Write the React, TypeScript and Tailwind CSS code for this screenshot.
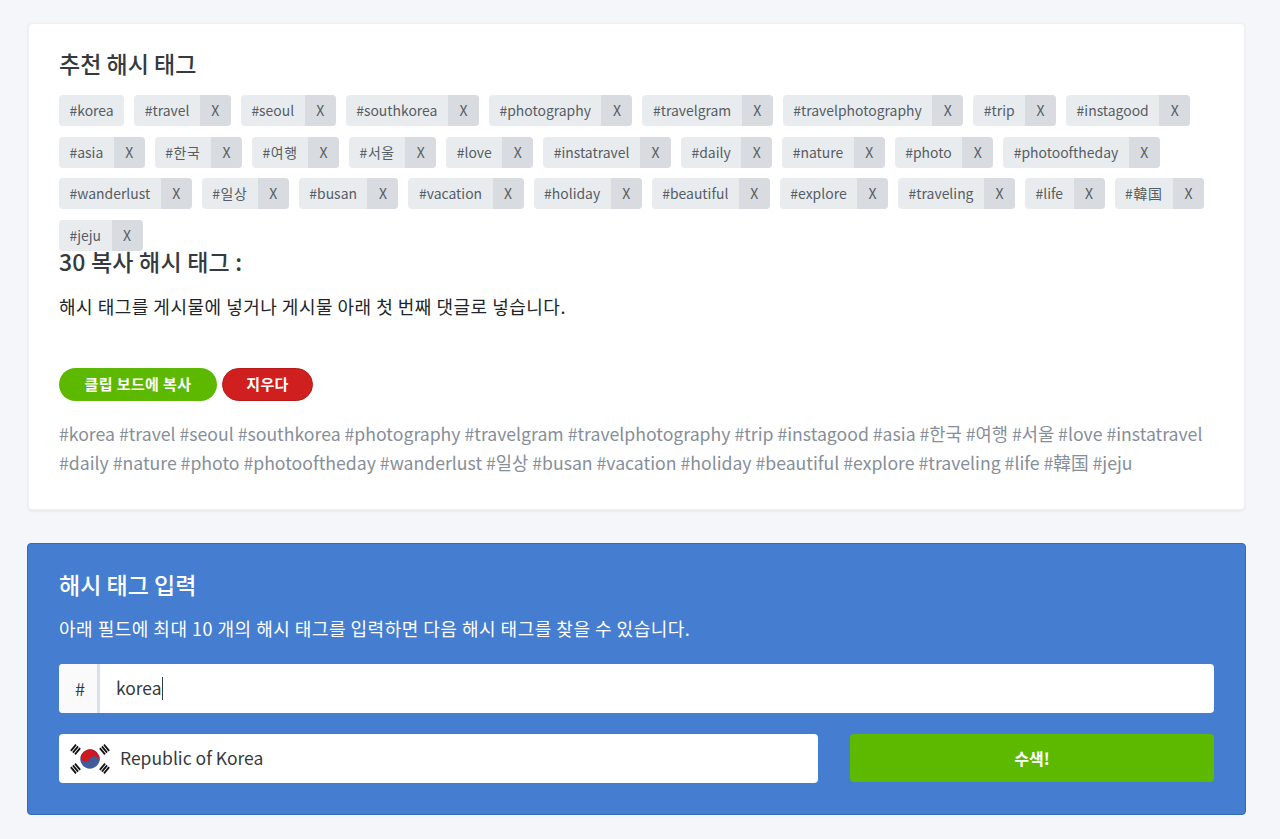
import React from "react";

const font = { fontFamily: '"Noto Sans CJK KR", "Noto Sans", sans-serif' };

const tags = [
  "#travel", "#seoul", "#southkorea", "#photography", "#travelgram", "#travelphotography", "#trip", "#instagood",
  "#asia", "#한국", "#여행", "#서울", "#love", "#instatravel", "#daily", "#nature", "#photo", "#photooftheday",
  "#wanderlust", "#일상", "#busan", "#vacation", "#holiday", "#beautiful", "#explore", "#traveling", "#life", "#韓国", "#jeju",
];

const wideTags = ["#한국", "#여행", "#서울", "#일상", "#韓国"];

function Tag({ label, removable = true }: { label: string; removable?: boolean }) {
  return (
    <div className="flex h-[31px] items-stretch overflow-hidden rounded-[4px] bg-[#e9ecef] text-[13.93px] text-[#565d64]">
      <span className={`flex items-center px-[10.5px] ${wideTags.includes(label) ? "tracking-[0.6px]" : ""}`}>{label}</span>
      {removable && <span className="flex w-[31px] items-center justify-center bg-[#d8dce0] text-[14px]">X</span>}
    </div>
  );
}

function KoreaFlag() {
  const bars = (x: number, y: number, angle: number) => (
    <g transform={`translate(${x} ${y}) rotate(${angle})`} fill="#111">
      <rect x="-4" y="-3.6" width="8" height="1.8" />
      <rect x="-4" y="-0.9" width="8" height="1.8" />
      <rect x="-4" y="1.8" width="8" height="1.8" />
    </g>
  );
  return (
    <svg width="42" height="30" viewBox="0 0 42 30">
      <g transform="rotate(25 21 15)">
        <circle cx="21" cy="15" r="9.7" fill="#3f5b9c" />
        <path d="M11.3 15a9.7 9.7 0 0 1 19.4 0a4.85 4.85 0 0 0-9.7 0a4.85 4.85 0 0 1-9.7 0z" fill="#cb1a20" />
      </g>
      {bars(6.5, 5.5, -50)}
      {bars(35.5, 5.5, 50)}
      {bars(6.5, 24.5, 50)}
      {bars(35.5, 24.5, -50)}
    </svg>
  );
}

export default function App() {
  return (
    <div className="min-h-[839px] bg-[#f5f6fa] px-[28px] pt-[23px]" style={font}>
      <div className="h-[487px] w-[1217px] rounded-[4px] border border-[#eef0f4] bg-white px-[30px] pt-[23px] shadow-[0_1px_3px_rgba(0,0,0,0.08)]">
        <h2 className="mb-[15px] text-[23px] leading-[33px] font-medium text-[#343a40]">추천 해시 태그</h2>
        <div className="flex flex-wrap gap-x-[10px] gap-y-[10.6px]">
          <Tag label="#korea" removable={false} />
          {tags.map((tag) => (
            <Tag key={tag} label={tag} />
          ))}
        </div>
        <h2 className="text-[23px] leading-[21px] font-medium tracking-[0.2px] text-[#343a40]">30 복사 해시 태그 :</h2>
        <p className="mt-[21px] text-[18px] leading-[26px] tracking-[0.5px] text-[#212529]">
          해시 태그를 게시물에 넣거나 게시물 아래 첫 번째 댓글로 넣습니다.
        </p>
        <div className="mt-[49px] flex gap-[5px]">
          <button className="flex h-[33px] w-[158px] items-center justify-center rounded-full bg-[#5cb900] text-[15px] font-bold tracking-[0.4px] text-white">
            클립 보드에 복사
          </button>
          <button className="flex h-[33px] w-[91px] items-center justify-center rounded-full border border-[#b81a1a] bg-[#cf1f1f] text-[15px] font-bold tracking-[0.4px] text-white">
            지우다
          </button>
        </div>
        <p className="mt-[18px] text-[17.65px] leading-[29px] text-[#868e9a]">
          #korea #travel #seoul #southkorea #photography #travelgram #travelphotography #trip #instagood #asia #한국 #여행 #서울 #love #instatravel #daily #nature #photo #photooftheday #wanderlust #일상 #busan #vacation #holiday #beautiful #explore #traveling #life #韓国 #jeju
        </p>
      </div>

      <div className="mt-[33px] -ml-px h-[272px] w-[1219px] rounded-[4px] border border-[#2f6cb8] bg-[#457ed0] px-[31px] pt-[24px] text-white">
        <h2 className="text-[23px] leading-[33px] font-medium">해시 태그 입력</h2>
        <p className="mt-[14px] text-[18px] leading-[26px] tracking-[0.5px]">
          아래 필드에 최대 10 개의 해시 태그를 입력하면 다음 해시 태그를 찾을 수 있습니다.
        </p>
        <div className="mt-[23px] flex h-[49px] w-[1155px] overflow-hidden rounded-[4px] bg-white text-[#343a40]">
          <span className="flex w-[41px] items-center justify-center border-r-[3px] border-[#d5e0f2] bg-[#fafafa] pl-[4px] text-[18px]">#</span>
          <span className="flex items-center pl-[16px] text-[17.4px]">
            korea<span className="ml-[0.5px] h-[23px] w-px bg-[#343a40]" />
          </span>
        </div>
        <div className="mt-[21px] flex justify-between">
          <div className="flex h-[49px] w-[759px] items-center rounded-[4px] bg-white pl-[10px] text-[17.5px] text-[#343a40]">
            <KoreaFlag />
            <span className="ml-[9px]">Republic of Korea</span>
          </div>
          <button className="h-[48px] w-[364px] rounded-[4px] bg-[#5cb900] text-[16px] font-bold text-white">수색!</button>
        </div>
      </div>
    </div>
  );
}
